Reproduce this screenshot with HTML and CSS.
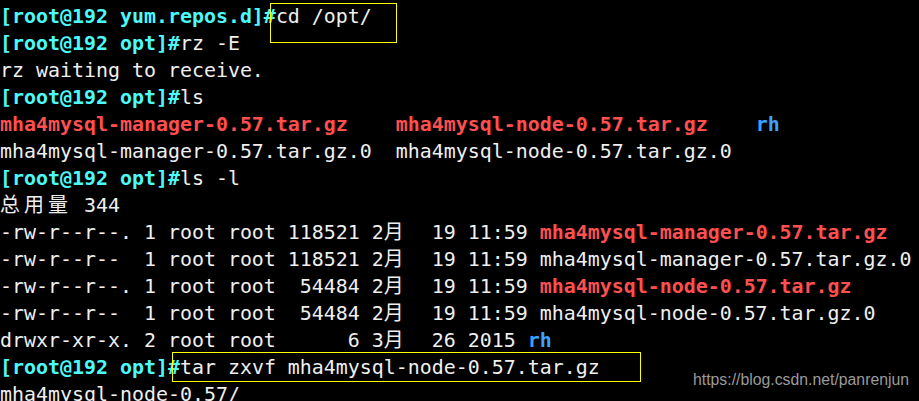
FILE: index.html
```html
<!DOCTYPE html>
<html lang="zh-CN">
<head>
<meta charset="utf-8">
<title>terminal</title>
<link rel="stylesheet" href="styles.css">
</head>
<body>
<div class="term">
<div class="line"><span class="p">[root@192 yum.repos.d]#</span><span class="hl hl1">cd /opt/</span></div>
<div class="line"><span class="p">[root@192 opt]#</span>rz -E</div>
<div class="line">rz waiting to receive.</div>
<div class="line"><span class="p">[root@192 opt]#</span>ls</div>
<div class="line"><span class="r">mha4mysql-manager-0.57.tar.gz</span>    <span class="r">mha4mysql-node-0.57.tar.gz</span>    <span class="b">rh</span></div>
<div class="line">mha4mysql-manager-0.57.tar.gz.0  mha4mysql-node-0.57.tar.gz.0</div>
<div class="line"><span class="p">[root@192 opt]#</span>ls -l</div>
<div class="line"><span class="w">总</span><span class="w">用</span><span class="w">量</span> 344</div>
<div class="line">-rw-r--r--. 1 root root 118521 2<span class="w">月</span>  19 11:59 <span class="r">mha4mysql-manager-0.57.tar.gz</span></div>
<div class="line">-rw-r--r--  1 root root 118521 2<span class="w">月</span>  19 11:59 mha4mysql-manager-0.57.tar.gz.0</div>
<div class="line">-rw-r--r--. 1 root root  54484 2<span class="w">月</span>  19 11:59 <span class="r">mha4mysql-node-0.57.tar.gz</span></div>
<div class="line">-rw-r--r--  1 root root  54484 2<span class="w">月</span>  19 11:59 mha4mysql-node-0.57.tar.gz.0</div>
<div class="line">drwxr-xr-x. 2 root root      6 3<span class="w">月</span>  26 2015 <span class="b">rh</span></div>
<div class="line"><span class="p">[root@192 opt]#</span><span class="hl hl2">tar zxvf mha4mysql-node-0.57.tar.gz</span></div>
<div class="line">mha4mysql-node-0.57/</div>
</div>
<div class="mark">https://blog.csdn.net/panrenjun</div>
</body>
</html>
```
FILE: styles.css
```css
html, body {
  margin: 0;
  padding: 0;
  background: #000;
  width: 919px;
  height: 401px;
  overflow: hidden;
}
body {
  position: relative;
}
.term {
  padding-top: 3px;
  font-family: "DejaVu Sans Mono", "Noto Sans CJK SC", monospace;
  font-size: 19.93px;
  line-height: 27px;
  color: #efefef;
}
.line {
  height: 27px;
  white-space: pre;
}
.p {
  color: #4dfafa;
  font-weight: bold;
}
.r {
  color: #ff4f4f;
  font-weight: bold;
}
.b {
  color: #3ba2ff;
  font-weight: bold;
}
.w {
  display: inline-block;
  width: 2ch;
  font-family: "DejaVu Sans Mono", "Noto Sans CJK SC", monospace;
  text-align: left;
}
.hl {
  position: relative;
}
.hl::before {
  content: "";
  position: absolute;
  border: 1px solid #ffff00;
  pointer-events: none;
}
.hl1::before {
  left: -6px;
  top: -2px;
  width: 125px;
  height: 38px;
}
.hl2::before {
  left: -8px;
  top: -4px;
  width: 467px;
  height: 28px;
}
.mark {
  position: absolute;
  left: 693px;
  top: 371px;
  font-family: "Liberation Sans", Arial, sans-serif;
  font-size: 15.8px;
  color: #9a9a9a;
}
```
